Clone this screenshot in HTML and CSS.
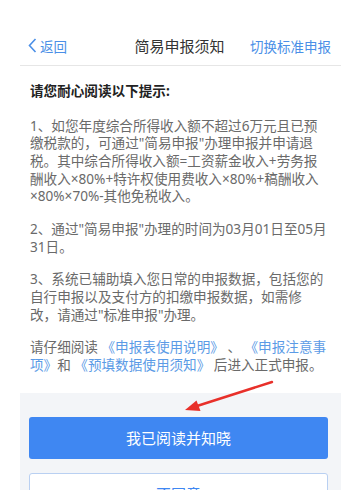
FILE: index.html
```html
<!DOCTYPE html>
<html lang="zh-CN">
<head>
  <meta charset="UTF-8">
  <meta name="viewport" content="width=device-width, initial-scale=1.0">
  <title>简易申报须知</title>
  <link rel="stylesheet" href="styles.css">
</head>
<body>
  <div class="page">
    <header class="topbar">
      <a class="back">
        <svg class="chevron" width="9" height="15" viewBox="0 0 9 15"><polyline points="7.5,1 1.5,7.5 7.5,14" fill="none" stroke="#4a8fe7" stroke-width="1.6"/></svg>返回
      </a>
      <h1 class="title">简易申报须知</h1>
      <a class="switch">切换标准申报</a>
    </header>

    <main class="notice">
      <h2>请您耐心阅读以下提示:</h2>
      <p>1、如您年度综合所得收入额不超过6万元且已预缴税款的，可通过"简易申报"办理申报并申请退税。其中综合所得收入额=工资薪金收入+劳务报酬收入×80%+特许权使用费收入×80%+稿酬收入×80%×70%-其他免税收入。</p>
      <p>2、通过"简易申报"办理的时间为03月01日至05月31日。</p>
      <p>3、系统已辅助填入您日常的申报数据，包括您的自行申报以及支付方的扣缴申报数据，如需修改，请通过"标准申报"办理。</p>
      <p>请仔细阅读 <a class="link">《申报表使用说明》</a> 、 <a class="link">《申报注意事项》</a>和 <a class="link">《预填数据使用须知》</a> 后进入正式申报。</p>
    </main>

    <footer class="actions">
      <button class="btn btn-primary">我已阅读并知晓</button>
      <button class="btn btn-ghost">不同意</button>
    </footer>

    <!-- red annotation arrow -->
    <svg class="arrow" width="95" height="36" viewBox="0 0 95 36">
      <line x1="89" y1="4" x2="14" y2="28" stroke="#e8302a" stroke-width="2.4" stroke-linecap="round"/>
      <polygon points="2,32 17.5,33 13.5,22.5" fill="#e8302a"/>
    </svg>
  </div>
</body>
</html>
```

FILE: styles.css
```css
html, body {
  margin: 0;
  padding: 0;
  background-color: #fff;
  overflow: hidden;
}

body {
  font-family: "Noto Sans", "Noto Sans CJK SC", sans-serif;
  color: #6a6a6a;
}

.page {
  position: relative;
  margin-left: 20px;
}

.topbar {
  display: grid;
  grid-template-columns: 1fr auto 1fr;
  align-items: center;
  padding: 35px 10px 10px 8px;
  height: 20px;
  border-bottom: 1px solid #e6e6e6;
}

.back {
  display: flex;
  align-items: center;
  color: #4a8fe7;
  font-size: 13.5px;
}

.chevron {
  margin-right: 3px;
}

.title {
  margin: 0;
  font-size: 15px;
  font-weight: normal;
  color: #333;
}

.switch {
  justify-self: end;
  color: #4a8fe7;
  font-size: 13.5px;
}

.notice {
  padding: 16px 12px 19px 10px;
  font-size: 13.6px;
  line-height: 1.3;
}

.notice h2 {
  margin: 0 0 17px;
  font-size: 13.6px;
  font-weight: bold;
  color: #222;
}

.notice p {
  margin: 0 0 15px;
}

.notice p:last-child {
  margin-bottom: 0;
}

.link {
  color: #5b9be6;
}

.actions {
  background-color: #f3f5f8;
  padding: 24px 13px 20px 9px;
  display: flex;
  flex-direction: column;
  gap: 14px;
}

.btn {
  height: 42px;
  border-radius: 3px;
  font-family: inherit;
  font-size: 15px;
}

.btn-primary {
  background-color: #3f87f2;
  border: none;
  color: #fff;
}

.btn-ghost {
  background-color: #fff;
  border: 1px solid #b9d0f2;
  color: #3f87f2;
}

.arrow {
  position: absolute;
  left: 163px;
  top: 378px;
}
```
